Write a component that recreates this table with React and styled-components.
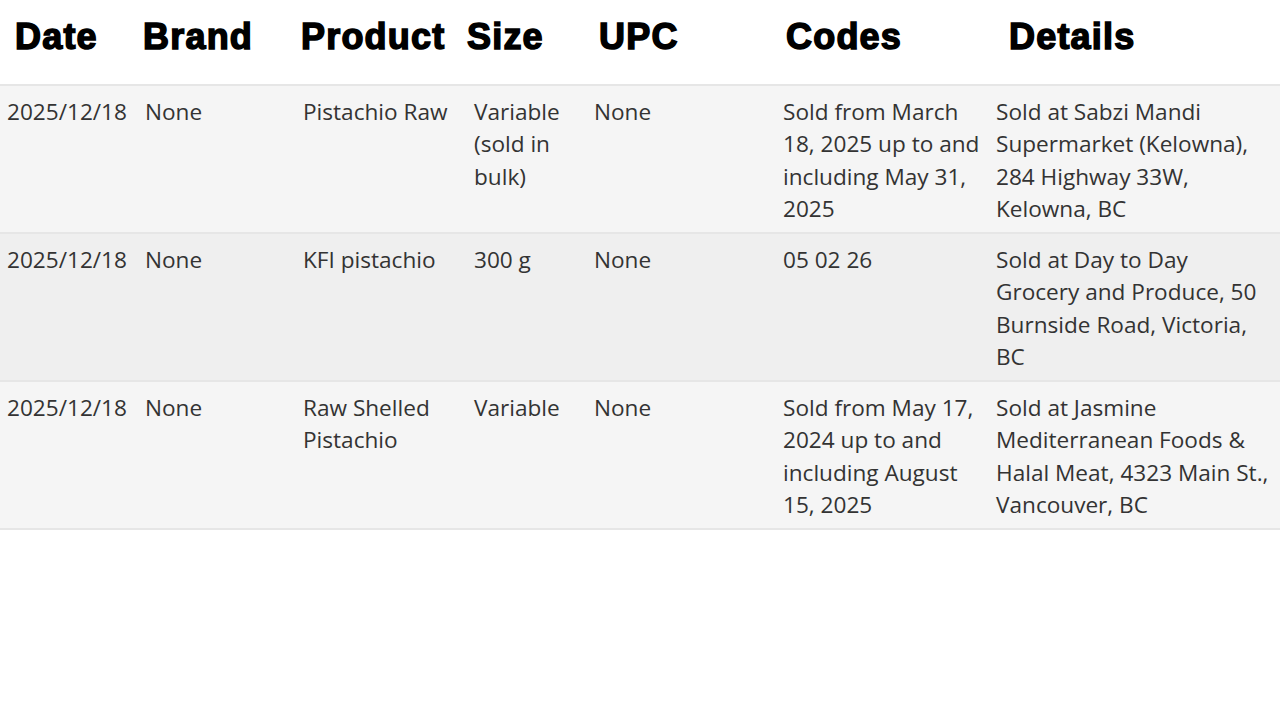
import React from "react";
import styled, { createGlobalStyle } from "styled-components";

const Global = createGlobalStyle`
  html, body { margin: 0; padding: 0; background: #ffffff; }
  body { font-family: "Open Sans", "Noto Sans", sans-serif; }
`;

const Table = styled.table`
  width: 1280px;
  table-layout: fixed;
  border-collapse: collapse;
  border-spacing: 0;
  color: #333333;
`;

const HeadCell = styled.th`
  height: 85px;
  box-sizing: border-box;
  padding: 16px 0 0 ${(p) => p.$indent}px;
  text-align: left;
  vertical-align: top;
  font-family: "Liberation Sans", Arial, sans-serif;
  font-weight: 700;
  font-size: 36px;
  line-height: 42px;
  color: #000000;
  -webkit-text-stroke: 1.5px #000000;
  letter-spacing: 1.2px;
  white-space: nowrap;
  border-bottom: 2px solid #e6e6e6;
`;

const Row = styled.tr`
  background: ${(p) => (p.$alt ? "#efefef" : "#f5f5f5")};
  border-bottom: 2px solid #e6e6e6;
`;

const Cell = styled.td`
  height: 148px;
  box-sizing: border-box;
  padding: 10px 7px 4px 7px;
  vertical-align: top;
  font-size: 22.6px;
  line-height: 32.3px;
  color: #333333;
`;

const columns = [
  { label: "Date", width: 138, indent: 15 },
  { label: "Brand", width: 158, indent: 5 },
  { label: "Product", width: 171, indent: 5 },
  { label: "Size", width: 120, indent: 0 },
  { label: "UPC", width: 189, indent: 12 },
  { label: "Codes", width: 213, indent: 10 },
  { label: "Details", width: 291, indent: 20 },
];

const rows = [
  [
    "2025/12/18",
    "None",
    "Pistachio Raw",
    "Variable (sold in bulk)",
    "None",
    "Sold from March 18, 2025 up to and including May 31, 2025",
    "Sold at Sabzi Mandi Supermarket (Kelowna), 284 Highway 33W, Kelowna, BC",
  ],
  [
    "2025/12/18",
    "None",
    "KFI pistachio",
    "300 g",
    "None",
    "05 02 26",
    "Sold at Day to Day Grocery and Produce, 50 Burnside Road, Victoria, BC",
  ],
  [
    "2025/12/18",
    "None",
    "Raw Shelled Pistachio",
    "Variable",
    "None",
    "Sold from May 17, 2024 up to and including August 15, 2025",
    "Sold at Jasmine Mediterranean Foods & Halal Meat, 4323 Main St., Vancouver, BC",
  ],
];

export default function App() {
  return (
    <>
      <Global />
      <Table>
        <colgroup>
          {columns.map((c) => (
            <col key={c.label} style={{ width: c.width }} />
          ))}
        </colgroup>
        <thead>
          <tr>
            {columns.map((c) => (
              <HeadCell key={c.label} $indent={c.indent}>
                {c.label}
              </HeadCell>
            ))}
          </tr>
        </thead>
        <tbody>
          {rows.map((r, i) => (
            <Row key={i} $alt={i % 2 === 1}>
              {r.map((v, j) => (
                <Cell key={j}>{v}</Cell>
              ))}
            </Row>
          ))}
        </tbody>
      </Table>
    </>
  );
}
